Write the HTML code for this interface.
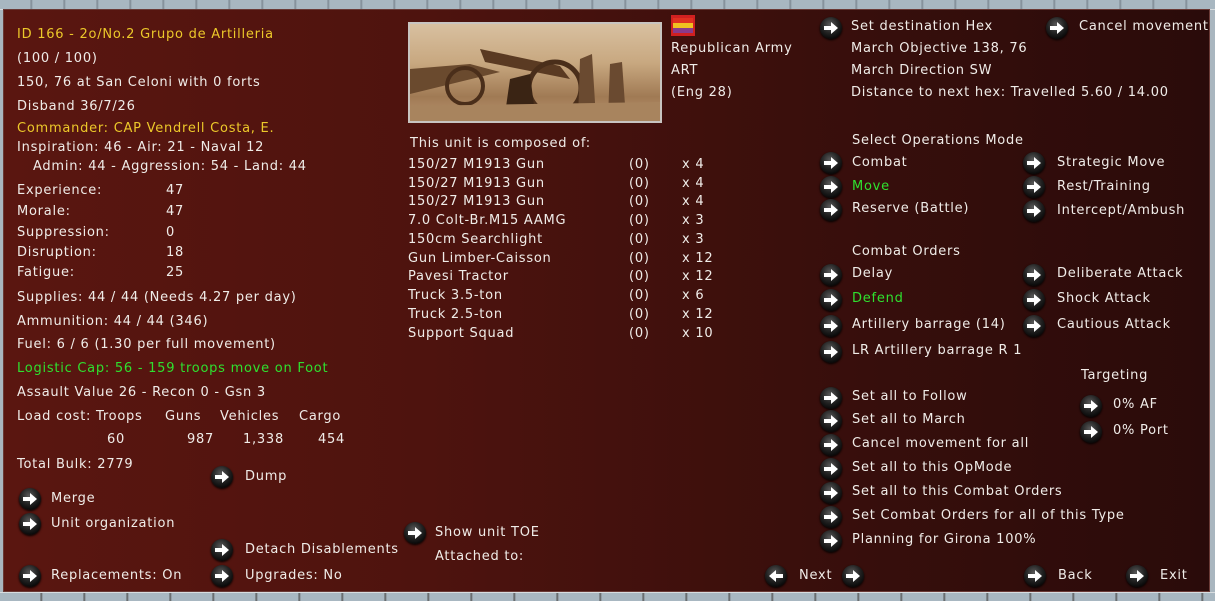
<!DOCTYPE html>
<html><head><meta charset="utf-8"><style>
html,body{margin:0;padding:0;}
body{width:1215px;height:600px;position:relative;overflow:hidden;background:#a9b6bf;font-family:"DejaVu Sans","Liberation Sans",sans-serif;font-size:13px;letter-spacing:0.75px;color:#f0ece8;}
#panel{position:absolute;left:3px;top:9px;width:1207px;height:583px;background:linear-gradient(90deg,#5a1610 0%,#4e130e 35%,#3a0f0c 65%,#2a0b0a 100%);box-shadow:inset 0 0 0 1px #6a3a36;}
#topbar{position:absolute;left:0;top:0;width:1215px;height:9px;background:repeating-linear-gradient(90deg,#a8b7c1 0,#a8b7c1 30px,#7a8690 31px,#a8b7c1 33px);border-bottom:1px solid #d8dde0;}
#botbar{position:absolute;left:0;top:592px;width:1215px;height:8px;background:repeating-linear-gradient(90deg,#a8b7c1 0,#a8b7c1 40px,#555 41px,#a8b7c1 43px);border-top:1px solid #d8dde0;}
.t{position:absolute;white-space:nowrap;line-height:16px;}
.y{color:#ecc82a;}
.g{color:#2fe02f;}
.b{position:absolute;width:22px;height:22px;border-radius:50%;background:radial-gradient(circle at 45% 35%,#5a5a5a 0%,#222 45%,#050505 80%);box-shadow:0 1px 2px #000;}
.b svg{position:absolute;left:3px;top:4px;}
</style></head><body>
<div id="topbar"></div><div id="botbar"></div>
<div id="panel"></div>

<div class="t y" style="left:17px;top:27px">ID 166 - 2o/No.2 Grupo de Artilleria</div>
<div class="t" style="left:17px;top:51px">(100 / 100)</div>
<div class="t" style="left:17px;top:75px">150, 76 at San Celoni with 0 forts</div>
<div class="t" style="left:17px;top:99px">Disband 36/7/26</div>
<div class="t y" style="left:17px;top:121px">Commander: CAP Vendrell Costa, E.</div>
<div class="t" style="left:17px;top:140px">Inspiration: 46 - Air: 21 - Naval 12</div>
<div class="t" style="left:33px;top:159px">Admin: 44 - Aggression: 54 - Land: 44</div>
<div class="t" style="left:17px;top:183px">Experience:</div><div class="t" style="left:166px;top:183px">47</div>
<div class="t" style="left:17px;top:204px">Morale:</div><div class="t" style="left:166px;top:204px">47</div>
<div class="t" style="left:17px;top:225px">Suppression:</div><div class="t" style="left:166px;top:225px">0</div>
<div class="t" style="left:17px;top:245px">Disruption:</div><div class="t" style="left:166px;top:245px">18</div>
<div class="t" style="left:17px;top:265px">Fatigue:</div><div class="t" style="left:166px;top:265px">25</div>
<div class="t" style="left:17px;top:290px">Supplies: 44 / 44 (Needs 4.27 per day)</div>
<div class="t" style="left:17px;top:314px">Ammunition: 44 / 44 (346)</div>
<div class="t" style="left:17px;top:337px">Fuel: 6 / 6 (1.30 per full movement)</div>
<div class="t g" style="left:17px;top:361px">Logistic Cap: 56 - 159 troops move on Foot</div>
<div class="t" style="left:17px;top:385px">Assault Value 26 - Recon 0 - Gsn 3</div>
<div class="t" style="left:17px;top:409px">Load cost: Troops</div>
<div class="t" style="left:165px;top:409px">Guns</div>
<div class="t" style="left:220px;top:409px">Vehicles</div>
<div class="t" style="left:299px;top:409px">Cargo</div>
<div class="t" style="left:107px;top:432px">60</div>
<div class="t" style="left:187px;top:432px">987</div>
<div class="t" style="left:243px;top:432px">1,338</div>
<div class="t" style="left:318px;top:432px">454</div>
<div class="t" style="left:17px;top:457px">Total Bulk: 2779</div>

<div class="b" style="left:211px;top:466px"><svg width="16" height="14" viewBox="0 0 16 14"><path d="M1 5h7V1l7 6-7 6V9H1z" fill="#fff"/></svg></div>
<div class="t" style="left:245px;top:469px">Dump</div>
<div class="b" style="left:19px;top:488px"><svg width="16" height="14" viewBox="0 0 16 14"><path d="M1 5h7V1l7 6-7 6V9H1z" fill="#fff"/></svg></div>
<div class="t" style="left:51px;top:491px">Merge</div>
<div class="b" style="left:19px;top:513px"><svg width="16" height="14" viewBox="0 0 16 14"><path d="M1 5h7V1l7 6-7 6V9H1z" fill="#fff"/></svg></div>
<div class="t" style="left:51px;top:516px">Unit organization</div>
<div class="b" style="left:211px;top:539px"><svg width="16" height="14" viewBox="0 0 16 14"><path d="M1 5h7V1l7 6-7 6V9H1z" fill="#fff"/></svg></div>
<div class="t" style="left:245px;top:542px">Detach Disablements</div>
<div class="b" style="left:19px;top:565px"><svg width="16" height="14" viewBox="0 0 16 14"><path d="M1 5h7V1l7 6-7 6V9H1z" fill="#fff"/></svg></div>
<div class="t" style="left:51px;top:568px">Replacements: On</div>
<div class="b" style="left:211px;top:565px"><svg width="16" height="14" viewBox="0 0 16 14"><path d="M1 5h7V1l7 6-7 6V9H1z" fill="#fff"/></svg></div>
<div class="t" style="left:245px;top:568px">Upgrades: No</div>

<div style="position:absolute;left:408px;top:22px;width:254px;height:101px;border:2px solid #c8c4c0;box-sizing:border-box;background:linear-gradient(180deg,#d8c0a0 0%,#c8a880 40%,#a07a54 75%,#b89470 100%);overflow:hidden">
<svg width="250" height="97" viewBox="0 0 250 97">
<path d="M0 45 L60 40 L90 48 L0 70z" fill="#6a4a2e"/>
<path d="M70 25 L150 42 L160 55 L75 38z" fill="#5a3a22"/>
<circle cx="55" cy="62" r="18" fill="none" stroke="#4a2e1a" stroke-width="4"/>
<circle cx="145" cy="64" r="26" fill="none" stroke="#4a2e1a" stroke-width="5"/>
<path d="M100 55 L120 50 L125 90 L95 90z" fill="#3a2414"/>
<path d="M170 35 L182 30 L186 95 L168 95z" fill="#6a4a30"/>
<path d="M200 40 L212 38 L216 95 L198 95z" fill="#6a4a30"/>
<path d="M0 82 L250 78 L250 97 L0 97z" fill="#a8845e"/>
</svg></div>
<div style="position:absolute;left:671px;top:15px;width:24px;height:21px;background:#d02020;"><div style="position:absolute;left:2px;top:3px;width:20px;height:15px;background:linear-gradient(180deg,#e03020 0,#e03020 33%,#f0c020 33%,#f0c020 66%,#8a3a8a 66%)"></div></div>
<div class="t" style="left:671px;top:41px">Republican Army</div>
<div class="t" style="left:671px;top:63px">ART</div>
<div class="t" style="left:671px;top:85px">(Eng 28)</div>

<div class="t" style="left:410px;top:136px">This unit is composed of:</div>
<div class="t" style="left:408px;top:157px">150/27 M1913 Gun</div><div class="t" style="left:629px;top:157px">(0)</div><div class="t" style="left:682px;top:157px">x 4</div>
<div class="t" style="left:408px;top:176px">150/27 M1913 Gun</div><div class="t" style="left:629px;top:176px">(0)</div><div class="t" style="left:682px;top:176px">x 4</div>
<div class="t" style="left:408px;top:194px">150/27 M1913 Gun</div><div class="t" style="left:629px;top:194px">(0)</div><div class="t" style="left:682px;top:194px">x 4</div>
<div class="t" style="left:408px;top:213px">7.0 Colt-Br.M15 AAMG</div><div class="t" style="left:629px;top:213px">(0)</div><div class="t" style="left:682px;top:213px">x 3</div>
<div class="t" style="left:408px;top:232px">150cm Searchlight</div><div class="t" style="left:629px;top:232px">(0)</div><div class="t" style="left:682px;top:232px">x 3</div>
<div class="t" style="left:408px;top:251px">Gun Limber-Caisson</div><div class="t" style="left:629px;top:251px">(0)</div><div class="t" style="left:682px;top:251px">x 12</div>
<div class="t" style="left:408px;top:269px">Pavesi Tractor</div><div class="t" style="left:629px;top:269px">(0)</div><div class="t" style="left:682px;top:269px">x 12</div>
<div class="t" style="left:408px;top:288px">Truck 3.5-ton</div><div class="t" style="left:629px;top:288px">(0)</div><div class="t" style="left:682px;top:288px">x 6</div>
<div class="t" style="left:408px;top:307px">Truck 2.5-ton</div><div class="t" style="left:629px;top:307px">(0)</div><div class="t" style="left:682px;top:307px">x 12</div>
<div class="t" style="left:408px;top:326px">Support Squad</div><div class="t" style="left:629px;top:326px">(0)</div><div class="t" style="left:682px;top:326px">x 10</div>

<div class="b" style="left:404px;top:522px"><svg width="16" height="14" viewBox="0 0 16 14"><path d="M1 5h7V1l7 6-7 6V9H1z" fill="#fff"/></svg></div>
<div class="t" style="left:435px;top:525px">Show unit TOE</div>
<div class="t" style="left:435px;top:549px">Attached to:</div>

<div class="b" style="left:820px;top:17px"><svg width="16" height="14" viewBox="0 0 16 14"><path d="M1 5h7V1l7 6-7 6V9H1z" fill="#fff"/></svg></div>
<div class="t" style="left:851px;top:19px">Set destination Hex</div>
<div class="b" style="left:1046px;top:17px"><svg width="16" height="14" viewBox="0 0 16 14"><path d="M1 5h7V1l7 6-7 6V9H1z" fill="#fff"/></svg></div>
<div class="t" style="left:1079px;top:19px">Cancel movement</div>
<div class="t" style="left:851px;top:41px">March Objective 138, 76</div>
<div class="t" style="left:851px;top:63px">March Direction SW</div>
<div class="t" style="left:851px;top:85px">Distance to next hex: Travelled 5.60 / 14.00</div>

<div class="t" style="left:852px;top:133px">Select Operations Mode</div>
<div class="b" style="left:820px;top:152px"><svg width="16" height="14" viewBox="0 0 16 14"><path d="M1 5h7V1l7 6-7 6V9H1z" fill="#fff"/></svg></div>
<div class="t" style="left:852px;top:155px">Combat</div>
<div class="b" style="left:820px;top:176px"><svg width="16" height="14" viewBox="0 0 16 14"><path d="M1 5h7V1l7 6-7 6V9H1z" fill="#fff"/></svg></div>
<div class="t g" style="left:852px;top:179px">Move</div>
<div class="b" style="left:820px;top:199px"><svg width="16" height="14" viewBox="0 0 16 14"><path d="M1 5h7V1l7 6-7 6V9H1z" fill="#fff"/></svg></div>
<div class="t" style="left:852px;top:201px">Reserve (Battle)</div>
<div class="b" style="left:1023px;top:152px"><svg width="16" height="14" viewBox="0 0 16 14"><path d="M1 5h7V1l7 6-7 6V9H1z" fill="#fff"/></svg></div>
<div class="t" style="left:1057px;top:155px">Strategic Move</div>
<div class="b" style="left:1023px;top:176px"><svg width="16" height="14" viewBox="0 0 16 14"><path d="M1 5h7V1l7 6-7 6V9H1z" fill="#fff"/></svg></div>
<div class="t" style="left:1057px;top:179px">Rest/Training</div>
<div class="b" style="left:1023px;top:200px"><svg width="16" height="14" viewBox="0 0 16 14"><path d="M1 5h7V1l7 6-7 6V9H1z" fill="#fff"/></svg></div>
<div class="t" style="left:1057px;top:203px">Intercept/Ambush</div>

<div class="t" style="left:852px;top:244px">Combat Orders</div>
<div class="b" style="left:820px;top:264px"><svg width="16" height="14" viewBox="0 0 16 14"><path d="M1 5h7V1l7 6-7 6V9H1z" fill="#fff"/></svg></div>
<div class="t" style="left:852px;top:266px">Delay</div>
<div class="b" style="left:820px;top:289px"><svg width="16" height="14" viewBox="0 0 16 14"><path d="M1 5h7V1l7 6-7 6V9H1z" fill="#fff"/></svg></div>
<div class="t g" style="left:852px;top:291px">Defend</div>
<div class="b" style="left:820px;top:315px"><svg width="16" height="14" viewBox="0 0 16 14"><path d="M1 5h7V1l7 6-7 6V9H1z" fill="#fff"/></svg></div>
<div class="t" style="left:852px;top:317px">Artillery barrage (14)</div>
<div class="b" style="left:820px;top:341px"><svg width="16" height="14" viewBox="0 0 16 14"><path d="M1 5h7V1l7 6-7 6V9H1z" fill="#fff"/></svg></div>
<div class="t" style="left:852px;top:343px">LR Artillery barrage R 1</div>
<div class="b" style="left:1023px;top:264px"><svg width="16" height="14" viewBox="0 0 16 14"><path d="M1 5h7V1l7 6-7 6V9H1z" fill="#fff"/></svg></div>
<div class="t" style="left:1057px;top:266px">Deliberate Attack</div>
<div class="b" style="left:1023px;top:289px"><svg width="16" height="14" viewBox="0 0 16 14"><path d="M1 5h7V1l7 6-7 6V9H1z" fill="#fff"/></svg></div>
<div class="t" style="left:1057px;top:291px">Shock Attack</div>
<div class="b" style="left:1023px;top:315px"><svg width="16" height="14" viewBox="0 0 16 14"><path d="M1 5h7V1l7 6-7 6V9H1z" fill="#fff"/></svg></div>
<div class="t" style="left:1057px;top:317px">Cautious Attack</div>

<div class="t" style="left:1081px;top:368px">Targeting</div>
<div class="b" style="left:1080px;top:395px"><svg width="16" height="14" viewBox="0 0 16 14"><path d="M1 5h7V1l7 6-7 6V9H1z" fill="#fff"/></svg></div>
<div class="t" style="left:1113px;top:397px">0% AF</div>
<div class="b" style="left:1080px;top:421px"><svg width="16" height="14" viewBox="0 0 16 14"><path d="M1 5h7V1l7 6-7 6V9H1z" fill="#fff"/></svg></div>
<div class="t" style="left:1113px;top:423px">0% Port</div>

<div class="b" style="left:820px;top:387px"><svg width="16" height="14" viewBox="0 0 16 14"><path d="M1 5h7V1l7 6-7 6V9H1z" fill="#fff"/></svg></div>
<div class="t" style="left:852px;top:389px">Set all to Follow</div>
<div class="b" style="left:820px;top:410px"><svg width="16" height="14" viewBox="0 0 16 14"><path d="M1 5h7V1l7 6-7 6V9H1z" fill="#fff"/></svg></div>
<div class="t" style="left:852px;top:412px">Set all to March</div>
<div class="b" style="left:820px;top:434px"><svg width="16" height="14" viewBox="0 0 16 14"><path d="M1 5h7V1l7 6-7 6V9H1z" fill="#fff"/></svg></div>
<div class="t" style="left:852px;top:436px">Cancel movement for all</div>
<div class="b" style="left:820px;top:458px"><svg width="16" height="14" viewBox="0 0 16 14"><path d="M1 5h7V1l7 6-7 6V9H1z" fill="#fff"/></svg></div>
<div class="t" style="left:852px;top:460px">Set all to this OpMode</div>
<div class="b" style="left:820px;top:482px"><svg width="16" height="14" viewBox="0 0 16 14"><path d="M1 5h7V1l7 6-7 6V9H1z" fill="#fff"/></svg></div>
<div class="t" style="left:852px;top:484px">Set all to this Combat Orders</div>
<div class="b" style="left:820px;top:506px"><svg width="16" height="14" viewBox="0 0 16 14"><path d="M1 5h7V1l7 6-7 6V9H1z" fill="#fff"/></svg></div>
<div class="t" style="left:852px;top:508px">Set Combat Orders for all of this Type</div>
<div class="b" style="left:820px;top:530px"><svg width="16" height="14" viewBox="0 0 16 14"><path d="M1 5h7V1l7 6-7 6V9H1z" fill="#fff"/></svg></div>
<div class="t" style="left:852px;top:532px">Planning for Girona 100%</div>

<div class="b" style="left:765px;top:565px"><svg width="16" height="14" viewBox="0 0 16 14"><path d="M15 5H8V1L1 7l7 6V9h7z" fill="#fff"/></svg></div>
<div class="t" style="left:799px;top:568px">Next</div>
<div class="b" style="left:842px;top:565px"><svg width="16" height="14" viewBox="0 0 16 14"><path d="M1 5h7V1l7 6-7 6V9H1z" fill="#fff"/></svg></div>
<div class="b" style="left:1024px;top:565px"><svg width="16" height="14" viewBox="0 0 16 14"><path d="M1 5h7V1l7 6-7 6V9H1z" fill="#fff"/></svg></div>
<div class="t" style="left:1058px;top:568px">Back</div>
<div class="b" style="left:1126px;top:565px"><svg width="16" height="14" viewBox="0 0 16 14"><path d="M1 5h7V1l7 6-7 6V9H1z" fill="#fff"/></svg></div>
<div class="t" style="left:1160px;top:568px">Exit</div>
</body></html>
